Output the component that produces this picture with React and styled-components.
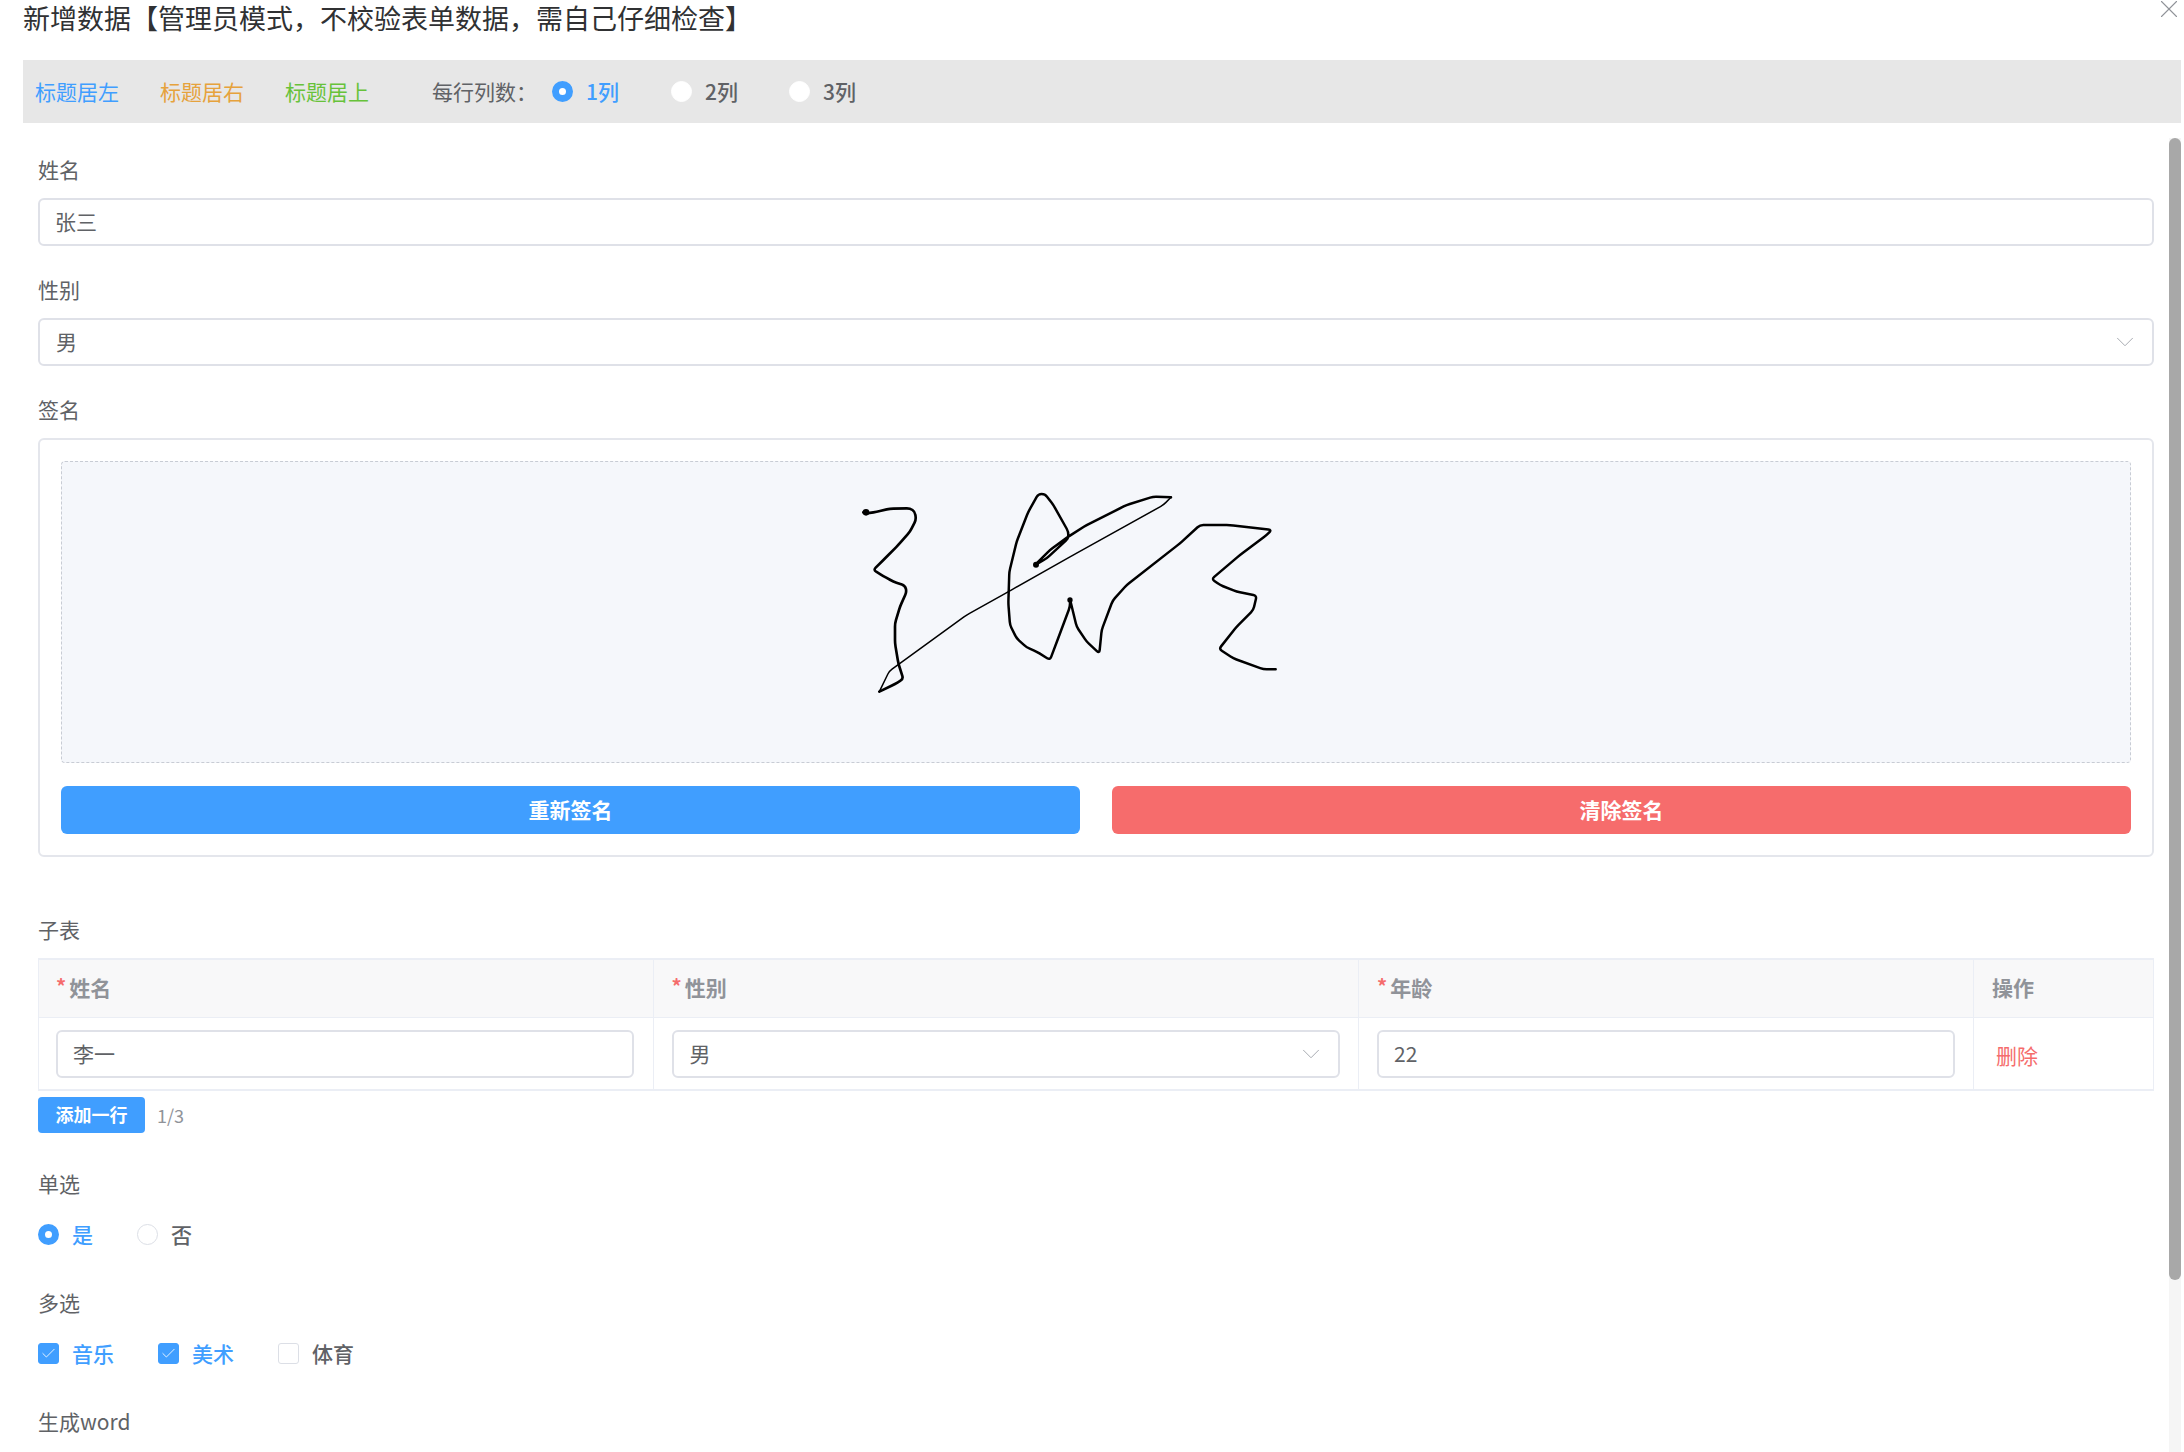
import React from 'react';
import styled, { createGlobalStyle } from 'styled-components';
import { X, ChevronDown, Check } from 'lucide-react';

const GlobalStyle = createGlobalStyle`
  html, body {
    margin: 0;
    padding: 0;
    background: #fff;
    overflow: hidden;
  }
  * {
    box-sizing: border-box;
  }
`;

const Dialog = styled.div`
  width: 2184px;
  height: 1452px;
  display: flex;
  flex-direction: column;
  position: relative;
  overflow: hidden;
  color: #606266;
  font-family: "Noto Sans CJK SC", "Noto Sans", sans-serif;
  font-size: 21px;
`;

const Title = styled.div`
  height: 60px;
  padding: 0 0 26px 23px;
  display: flex;
  align-items: center;
  font-size: 27px;
  line-height: 1;
  color: #303133;
  white-space: nowrap;
`;

const CloseButton = styled.span`
  position: absolute;
  top: -6px;
  right: 0;
  display: flex;
  color: #909399;
`;

const Toolbar = styled.div`
  height: 63px;
  margin: 0 3px 0 23px;
  padding: 0 0 1px 12px;
  background: #e7e7e7;
  display: flex;
  align-items: center;
  flex: none;
`;

const AlignLink = styled.span`
  color: ${p => p.$color};
  margin-right: 41px;
  line-height: 1;
`;

const ColumnsLabel = styled.span`
  width: 95px;
  flex: none;
  margin: 0 25px 0 22px;
  line-height: 1;
  white-space: nowrap;
`;

const RadioOption = styled.label`
  display: flex;
  align-items: center;
  gap: 13px;
  width: ${p => p.$width}px;
  color: ${p => (p.$on ? '#409eff' : '#606266')};
  font-weight: 500;
  line-height: 1;
`;

const RadioDot = styled.span`
  width: 21px;
  height: 21px;
  border-radius: 50%;
  flex: none;
  background: #fff;
  border: ${p => (p.$on ? '7px solid #409eff' : '1px solid #dcdfe6')};
  border-color: ${p => (p.$bare ? '#fff' : undefined)};
`;

const Body = styled.div`
  flex: 1;
  min-height: 0;
  margin-top: 15px;
  overflow: hidden;
`;

const ScrollTrack = styled.div`
  position: absolute;
  top: 138px;
  right: 3px;
  bottom: 0;
  width: 12px;
  background: #f5f5f5;
`;

const ScrollThumb = styled.div`
  height: 1142px;
  border-radius: 6px;
  background: #a8a8a8;
`;

const Form = styled.div`
  width: 2154px;
  padding-left: 38px;
`;

const FieldLabel = styled.div`
  height: 60px;
  padding-top: 2px;
  display: flex;
  align-items: center;
  line-height: 1;
  margin-top: ${p => p.$top || 0}px;
`;

const Field = styled.div`
  height: 48px;
  margin-bottom: 12px;
  padding: 0 16px 2px ${p => (p.$input ? 15 : 16)}px;
  border: 2px solid #dfe1e8;
  border-radius: 6px;
  display: flex;
  align-items: center;
  justify-content: space-between;
  background: #fff;
  line-height: 1;
  svg {
    color: #a8abb2;
    flex: none;
    margin: 2px -4px 0 0;
  }
`;

const SignBox = styled.div`
  height: 419px;
  padding: 21px;
  border: 2px solid #e4e6ec;
  border-radius: 6px;
  display: flex;
  flex-direction: column;
  gap: 23px;
`;

const SignCanvas = styled.div`
  height: 302px;
  position: relative;
  background: #f5f7fb;
  border: 1px dashed #c8ccd4;
  border-radius: 4px;
`;

const SignDrawing = styled.svg`
  position: absolute;
  left: 758px;
  top: 8px;
  width: 480px;
  height: 240px;
`;

const SignButtons = styled.div`
  display: grid;
  grid-template-columns: 1fr 1fr;
  gap: 32px;
`;

const SignButton = styled.div`
  height: 48px;
  padding-bottom: 3px;
  border-radius: 6px;
  background: ${p => p.$bg};
  color: #fff;
  font-weight: 700;
  display: flex;
  align-items: center;
  justify-content: center;
`;

const SubTable = styled.div`
  width: 2116px;
  height: 133px;
  display: grid;
  grid-template-columns: 614.5px 705.5px 615px 1fr;
  grid-template-rows: 58px 1fr;
  border: 1px solid #ebeef5;
  border-top-width: 2px;
  border-bottom-width: 2px;
`;

const HeadCell = styled.div`
  background: #f8f8f9;
  border-right: 1px solid #ebeef5;
  border-bottom: 1px solid #ebeef5;
  padding: 0 0 2px 18px;
  display: flex;
  align-items: center;
  gap: 3px;
  color: #909399;
  font-weight: 700;
  line-height: 1;
  &:first-child {
    padding-left: 17px;
  }
  &:nth-child(4) {
    border-right: none;
  }
`;

const Star = styled.span`
  color: #f56c6c;
  font-size: 20px;
  margin-top: -3px;
`;

const RowCell = styled.div`
  border-right: 1px solid #ebeef5;
  padding: 12px 18px 0;
  &:nth-child(5) {
    padding: 12px 19px 0 17px;
  }
  &:last-child {
    border-right: none;
  }
`;

const DeleteLink = styled.div`
  color: #f56c6c;
  line-height: 1;
  margin: 15px 0 0 4px;
`;

const AddRow = styled.div`
  display: flex;
  align-items: center;
  gap: 12px;
  margin: 6px 0 19px;
`;

const AddButton = styled.div`
  width: 107px;
  height: 36px;
  padding-bottom: 2px;
  border-radius: 4px;
  background: #409eff;
  color: #fff;
  font-size: 18px;
  font-weight: 700;
  display: flex;
  align-items: center;
  justify-content: center;
`;

const PageCount = styled.span`
  color: #909399;
  font-size: 18px;
  line-height: 1;
`;

const OptionRow = styled.div`
  height: 44px;
  display: flex;
  align-items: center;
  margin-bottom: 15px;
`;

const CheckOption = styled.label`
  display: flex;
  align-items: center;
  gap: 13px;
  width: 120px;
  color: ${p => (p.$on ? '#409eff' : '#606266')};
  font-weight: 500;
  line-height: 1;
`;

const CheckBoxMark = styled.span`
  width: 21px;
  height: 21px;
  border-radius: 3px;
  flex: none;
  display: flex;
  align-items: center;
  justify-content: center;
  color: #fff;
  background: ${p => (p.$on ? '#409eff' : '#fff')};
  border: 1px solid ${p => (p.$on ? '#409eff' : '#dcdfe6')};
`;

const SIGN_THIN = [[178, 665], [208, 603], [440, 435], [565, 365], [760, 255], [1030, 105], [1053, 82]];
const SIGN_HEAD = [[130, 127], [145, 130], [170, 125], [210, 116], [270, 115], [285, 125], [288, 150], [270, 185], [235, 225], [195, 265], [160, 300], [190, 318], [220, 335], [255, 347], [260, 365], [240, 410], [225, 460], [225, 520], [235, 580], [250, 627], [225, 642], [178, 665]];
const SIGN_TAIL = [[1053, 82], [1000, 80], [920, 105], [800, 165], [745, 200], [690, 240], [645, 285], [680, 265], [745, 205], [745, 185], [700, 105], [675, 72], [655, 72], [625, 125], [590, 215], [568, 305], [565, 400], [570, 465], [590, 505], [620, 532], [650, 545], [690, 570], [720, 490], [750, 410], [750, 388], [770, 470], [800, 515], [838, 550], [845, 480], [878, 392], [920, 345], [1080, 220], [1140, 165], [1230, 165], [1355, 180], [1340, 195], [1260, 255], [1175, 327], [1200, 345], [1250, 365], [1310, 377], [1300, 420], [1250, 470], [1197, 537], [1240, 565], [1330, 598], [1367, 598]];

// softens the corners of a pen stroke, keeps the tips roughly where they are
const strokePath = points => {
  let d = `M${points[0][0]} ${points[0][1]}`;
  for (let i = 1; i < points.length - 1; i++) {
    const [x, y] = points[i];
    const [px, py] = points[i - 1];
    const [nx, ny] = points[i + 1];
    const lenA = Math.hypot(x - px, y - py);
    const lenB = Math.hypot(nx - x, ny - y);
    const a = Math.min(10, lenA / 2) / lenA;
    const b = Math.min(10, lenB / 2) / lenB;
    d += ` L${x + (px - x) * a} ${y + (py - y) * a} Q${x} ${y} ${x + (nx - x) * b} ${y + (ny - y) * b}`;
  }
  const last = points[points.length - 1];
  return `${d} L${last[0]} ${last[1]}`;
};

const Signature = () => (
  <SignDrawing viewBox="0 0 1440 720" fill="none" stroke="#000" strokeLinejoin="round" strokeLinecap="round">
    <path d={strokePath(SIGN_THIN)} strokeWidth="4.5" />
    <path d={strokePath(SIGN_HEAD)} strokeWidth="8" />
    <path d={strokePath(SIGN_TAIL)} strokeWidth="7.5" />
    <circle cx="138" cy="127" r="10" fill="#000" stroke="none" />
    <circle cx="648" cy="284" r="9" fill="#000" stroke="none" />
    <circle cx="750" cy="390" r="8" fill="#000" stroke="none" />
  </SignDrawing>
);

const Chevron = () => <ChevronDown size={30} strokeWidth={0.8} />;
const Tick = () => <Check size={17} strokeWidth={1.2} />;

export default function App() {
  return (
    <Dialog>
      <GlobalStyle />
      <Title>新增数据【管理员模式，不校验表单数据，需自己仔细检查】</Title>
      <CloseButton><X size={30} strokeWidth={0.9} /></CloseButton>
      <Toolbar>
        <AlignLink $color="#409eff">标题居左</AlignLink>
        <AlignLink $color="#e6a23c">标题居右</AlignLink>
        <AlignLink $color="#67c23a">标题居上</AlignLink>
        <ColumnsLabel>每行列数：</ColumnsLabel>
        <RadioOption $on $width={119}><RadioDot $on />1列</RadioOption>
        <RadioOption $width={118}><RadioDot $bare />2列</RadioOption>
        <RadioOption $width={118}><RadioDot $bare />3列</RadioOption>
      </Toolbar>
      <Body>
        <Form>
          <FieldLabel>姓名</FieldLabel>
          <Field $input>张三</Field>
          <FieldLabel>性别</FieldLabel>
          <Field>男<Chevron /></Field>
          <FieldLabel>签名</FieldLabel>
          <SignBox>
            <SignCanvas><Signature /></SignCanvas>
            <SignButtons>
              <SignButton $bg="#409eff">重新签名</SignButton>
              <SignButton $bg="#f66c6c">清除签名</SignButton>
            </SignButtons>
          </SignBox>
          <FieldLabel $top={41}>子表</FieldLabel>
          <SubTable>
            <HeadCell><Star>*</Star>姓名</HeadCell>
            <HeadCell><Star>*</Star>性别</HeadCell>
            <HeadCell><Star>*</Star>年龄</HeadCell>
            <HeadCell>操作</HeadCell>
            <RowCell><Field $input>李一</Field></RowCell>
            <RowCell><Field>男<Chevron /></Field></RowCell>
            <RowCell><Field $input>22</Field></RowCell>
            <RowCell><DeleteLink>删除</DeleteLink></RowCell>
          </SubTable>
          <AddRow>
            <AddButton>添加一行</AddButton>
            <PageCount>1/3</PageCount>
          </AddRow>
          <FieldLabel>单选</FieldLabel>
          <OptionRow>
            <RadioOption $on $width={99}><RadioDot $on />是</RadioOption>
            <RadioOption $width={99}><RadioDot />否</RadioOption>
          </OptionRow>
          <FieldLabel>多选</FieldLabel>
          <OptionRow>
            <CheckOption $on><CheckBoxMark $on><Tick /></CheckBoxMark>音乐</CheckOption>
            <CheckOption $on><CheckBoxMark $on><Tick /></CheckBoxMark>美术</CheckOption>
            <CheckOption><CheckBoxMark />体育</CheckOption>
          </OptionRow>
          <FieldLabel>生成word</FieldLabel>
        </Form>
      </Body>
      <ScrollTrack><ScrollThumb /></ScrollTrack>
    </Dialog>
  );
}
